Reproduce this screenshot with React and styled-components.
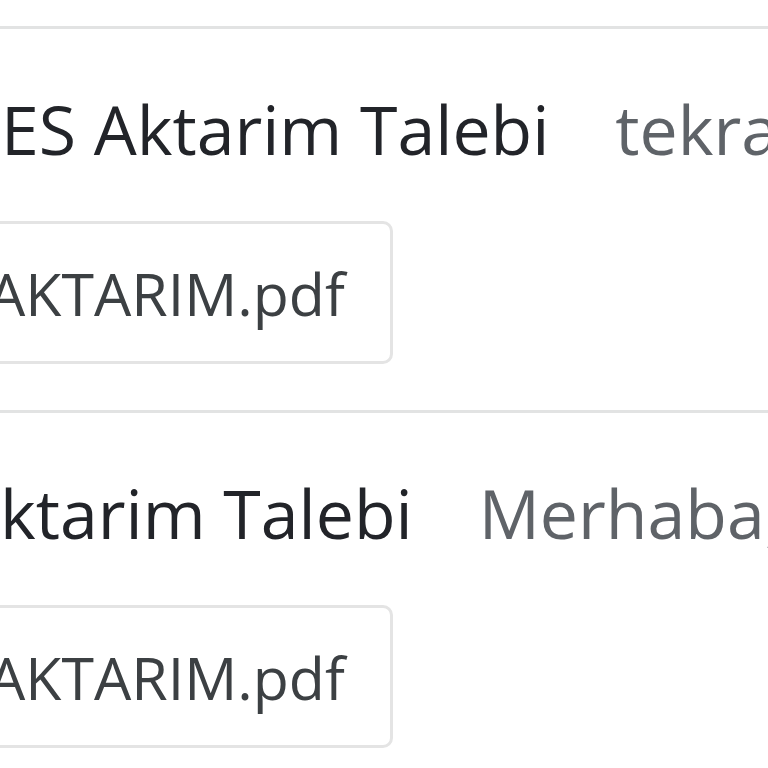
import styled, { createGlobalStyle } from "styled-components";

//STYLED COMPONENTS
//=======================================
const GlobalStyle = createGlobalStyle`
  html, body {
    margin: 0;
    padding: 0;
    background: #ffffff;
  }
  body {
    font-family: "Open Sans", "Noto Sans", "DejaVu Sans", sans-serif;
  }
`;

const Viewport = styled.main`
  width: 768px;
  height: 768px;
  overflow: hidden;
  background: #ffffff;
`;

const List = styled.section`
  padding-top: 26px;
  margin-left: -43px;
  width: 1400px;
`;

const Row = styled.article`
  border-top: 3px solid #e2e3e3;
  padding: 53px 0 46px;
  display: flex;
  flex-direction: column;
  gap: 46px;
`;

const Line = styled.div`
  display: flex;
  gap: 66px;
  font-size: 68px;
  white-space: nowrap;
`;

const Subject = styled.span`
  color: #222429;
`;

const Snippet = styled.span`
  color: #5f6368;
`;

const Chip = styled.div`
  align-self: flex-start;
  display: inline-flex;
  align-items: center;
  gap: 30px;
  height: 137px;
  margin-left: -98px;
  padding: 0 45px 0 40px;
  border: 3px solid #e4e4e4;
  border-radius: 10px;
  font-size: 59px;
  color: #3c4043;
  white-space: nowrap;
`;

const FileIcon = styled.svg`
  width: 56px;
  height: 56px;
  flex: none;
`;
//=======================================

const rows = [
  { subject: "BES Aktarim Talebi", snippet: "tekrar merhaba", file: "AKTARIM.pdf" },
  { subject: "Aktarim Talebi", snippet: "Merhaba, ekte", file: "AKTARIM.pdf" },
];

const App = () => {
  return (
    <>
      <GlobalStyle />
      <Viewport>
        <List>
          {rows.map((row, i) => (
            <Row key={i}>
              <Line>
                <Subject>{row.subject}</Subject>
                <Snippet>{row.snippet}</Snippet>
              </Line>
              <Chip>
                <FileIcon viewBox="0 0 24 24">
                  <rect x="3" y="2" width="18" height="20" rx="2" fill="#ea4335" />
                </FileIcon>
                <span>{row.file}</span>
              </Chip>
            </Row>
          ))}
        </List>
      </Viewport>
    </>
  );
};

export default App;
